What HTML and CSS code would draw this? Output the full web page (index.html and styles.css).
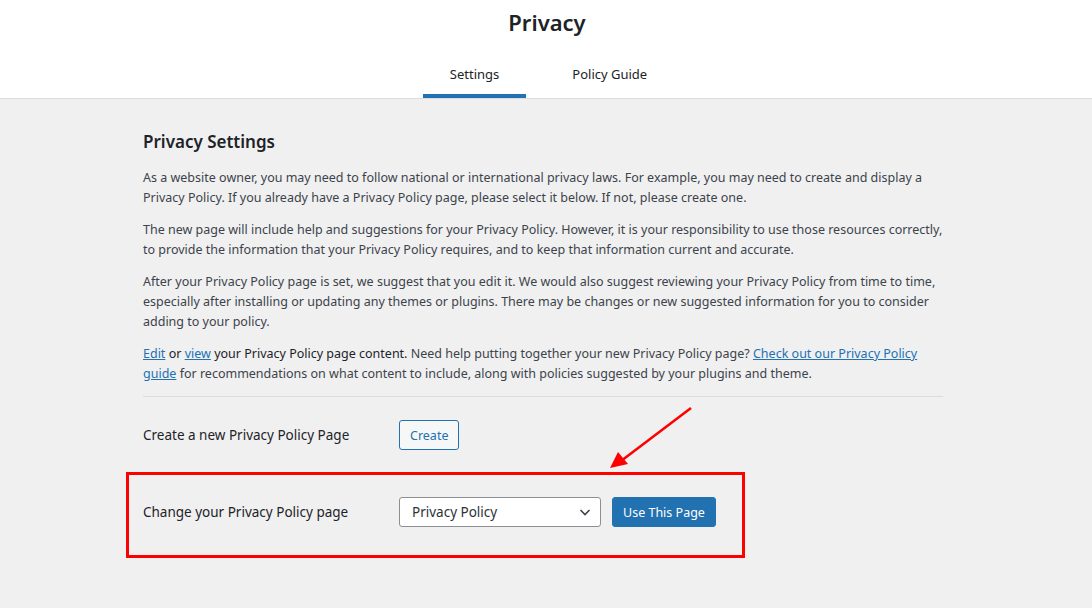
FILE: index.html
```html
<!DOCTYPE html>
<html>
<head>
<meta charset="utf-8">
<link rel="stylesheet" href="styles.css">
</head>
<body>
<header class="top">
  <h1 class="title">Privacy</h1>
  <nav class="tabs">
    <a class="tab active">Settings</a>
    <a class="tab">Policy Guide</a>
  </nav>
</header>
<main class="main">
  <h2 class="heading">Privacy Settings</h2>
  <p>As a website owner, you may need to follow national or international privacy laws. For example, you may need to create and display a Privacy Policy. If you already have a Privacy Policy page, please select it below. If not, please create one.</p>
  <p>The new page will include help and suggestions for your Privacy Policy. However, it is your responsibility to use those resources correctly, to provide the information that your Privacy Policy requires, and to keep that information current and accurate.</p>
  <p>After your Privacy Policy page is set, we suggest that you edit it. We would also suggest reviewing your Privacy Policy from time to time, especially after installing or updating any themes or plugins. There may be changes or new suggested information for you to consider adding to your policy.</p>
  <p><a class="link">Edit</a> <span class="strong">or</span> <a class="link">view</a> <span class="strong">your Privacy Policy page content.</span> Need help putting together your new Privacy Policy page? <a class="link">Check out our Privacy Policy guide</a> for recommendations on what content to include, along with policies suggested by your plugins and theme.</p>
  <hr class="sep">
  <div class="row row-create">
    <div class="label">Create a new Privacy Policy Page</div>
    <button class="btn-secondary">Create</button>
  </div>
  <div class="row row-change">
    <div class="label">Change your Privacy Policy page</div>
    <div class="select">
      <span>Privacy Policy</span>
      <svg class="chev" width="14" height="14" viewBox="0 0 14 14"><path d="M2.5 5 L7 9.5 L11.5 5" fill="none" stroke="#3c434a" stroke-width="1.6"/></svg>
    </div>
    <button class="btn-primary">Use This Page</button>
  </div>
  <div class="annot-box"></div>
  <svg class="annot-arrow" width="100" height="80" viewBox="0 0 100 80">
    <line x1="87" y1="4" x2="17" y2="57" stroke="#f00" stroke-width="2.5"/>
    <polygon points="6,64 14,48 24,60" fill="#f00"/>
  </svg>
</main>
</body>
</html>
```
FILE: styles.css
```css
html, body {
  margin: 0;
  padding: 0;
}
body {
  background: #f0f0f1;
  font-family: "Segoe UI", "Noto Sans", "Open Sans", sans-serif;
  font-size: 12.5px;
  color: #3c434a;
  height: 608px;
  overflow: hidden;
}
.top {
  background: #fff;
  border-bottom: 1px solid #dcdcde;
  display: flex;
  flex-direction: column;
  align-items: center;
}
.title {
  margin: 6px 0 0;
  font-size: 22px;
  font-weight: 600;
  line-height: 32px;
  color: #1d2327;
  padding-left: 2px;
}
.tabs {
  display: flex;
  margin-top: 16px;
  padding-left: 4px;
}
.tab {
  display: block;
  padding: 10px 27px 10px;
  line-height: 20px;
  font-size: 13px;
  color: #1d2327;
  border-bottom: 4px solid transparent;
}
.tab.active {
  border-bottom-color: #2271b1;
}
.tab + .tab {
  margin-left: 20px;
  padding: 10px 26px 10px;
}
.main {
  position: relative;
  width: 800px;
  margin-left: 143px;
  padding-top: 31px;
}
.heading {
  margin: 0 0 14px;
  font-size: 17px;
  font-weight: 600;
  line-height: 24px;
  color: #1d2327;
}
p {
  margin: 0 0 12px;
  line-height: 20px;
}
.strong {
  color: #1d2327;
}
.link {
  color: #2271b1;
  text-decoration: underline;
}
.sep {
  border: 0;
  border-top: 1px solid #dcdcde;
  margin: 10px 0 0;
}
.row {
  display: flex;
  align-items: center;
}
.row-create {
  margin-top: 23px;
}
.row-change {
  margin-top: 47px;
}
.label {
  width: 256px;
  color: #1d2327;
  font-weight: 400;
  font-size: 13.5px;
  line-height: 20px;
}
.btn-secondary {
  font-family: inherit;
  font-size: 12.5px;
  height: 30px;
  padding: 0 10px;
  color: #2271b1;
  border: 1px solid #2271b1;
  background: #f6f7f7;
  border-radius: 3px;
}
.select {
  width: 202px;
  height: 30px;
  box-sizing: border-box;
  border: 1px solid #8c8f94;
  border-radius: 3px;
  background: #fff;
  display: flex;
  align-items: center;
  justify-content: space-between;
  padding: 0 8px 0 12px;
  font-size: 13.5px;
  color: #2c3338;
}
.chev {
  display: block;
}
.btn-primary {
  margin-left: 11px;
  font-family: inherit;
  font-size: 12.5px;
  height: 30px;
  padding: 0 10px;
  color: #fff;
  background: #2271b1;
  border: 1px solid #2271b1;
  border-radius: 3px;
}
.annot-box {
  position: absolute;
  left: -17px;
  top: 373px;
  width: 613px;
  height: 80px;
  border: 3px solid #f00;
}
.annot-arrow {
  position: absolute;
  left: 461px;
  top: 305px;
}
```
